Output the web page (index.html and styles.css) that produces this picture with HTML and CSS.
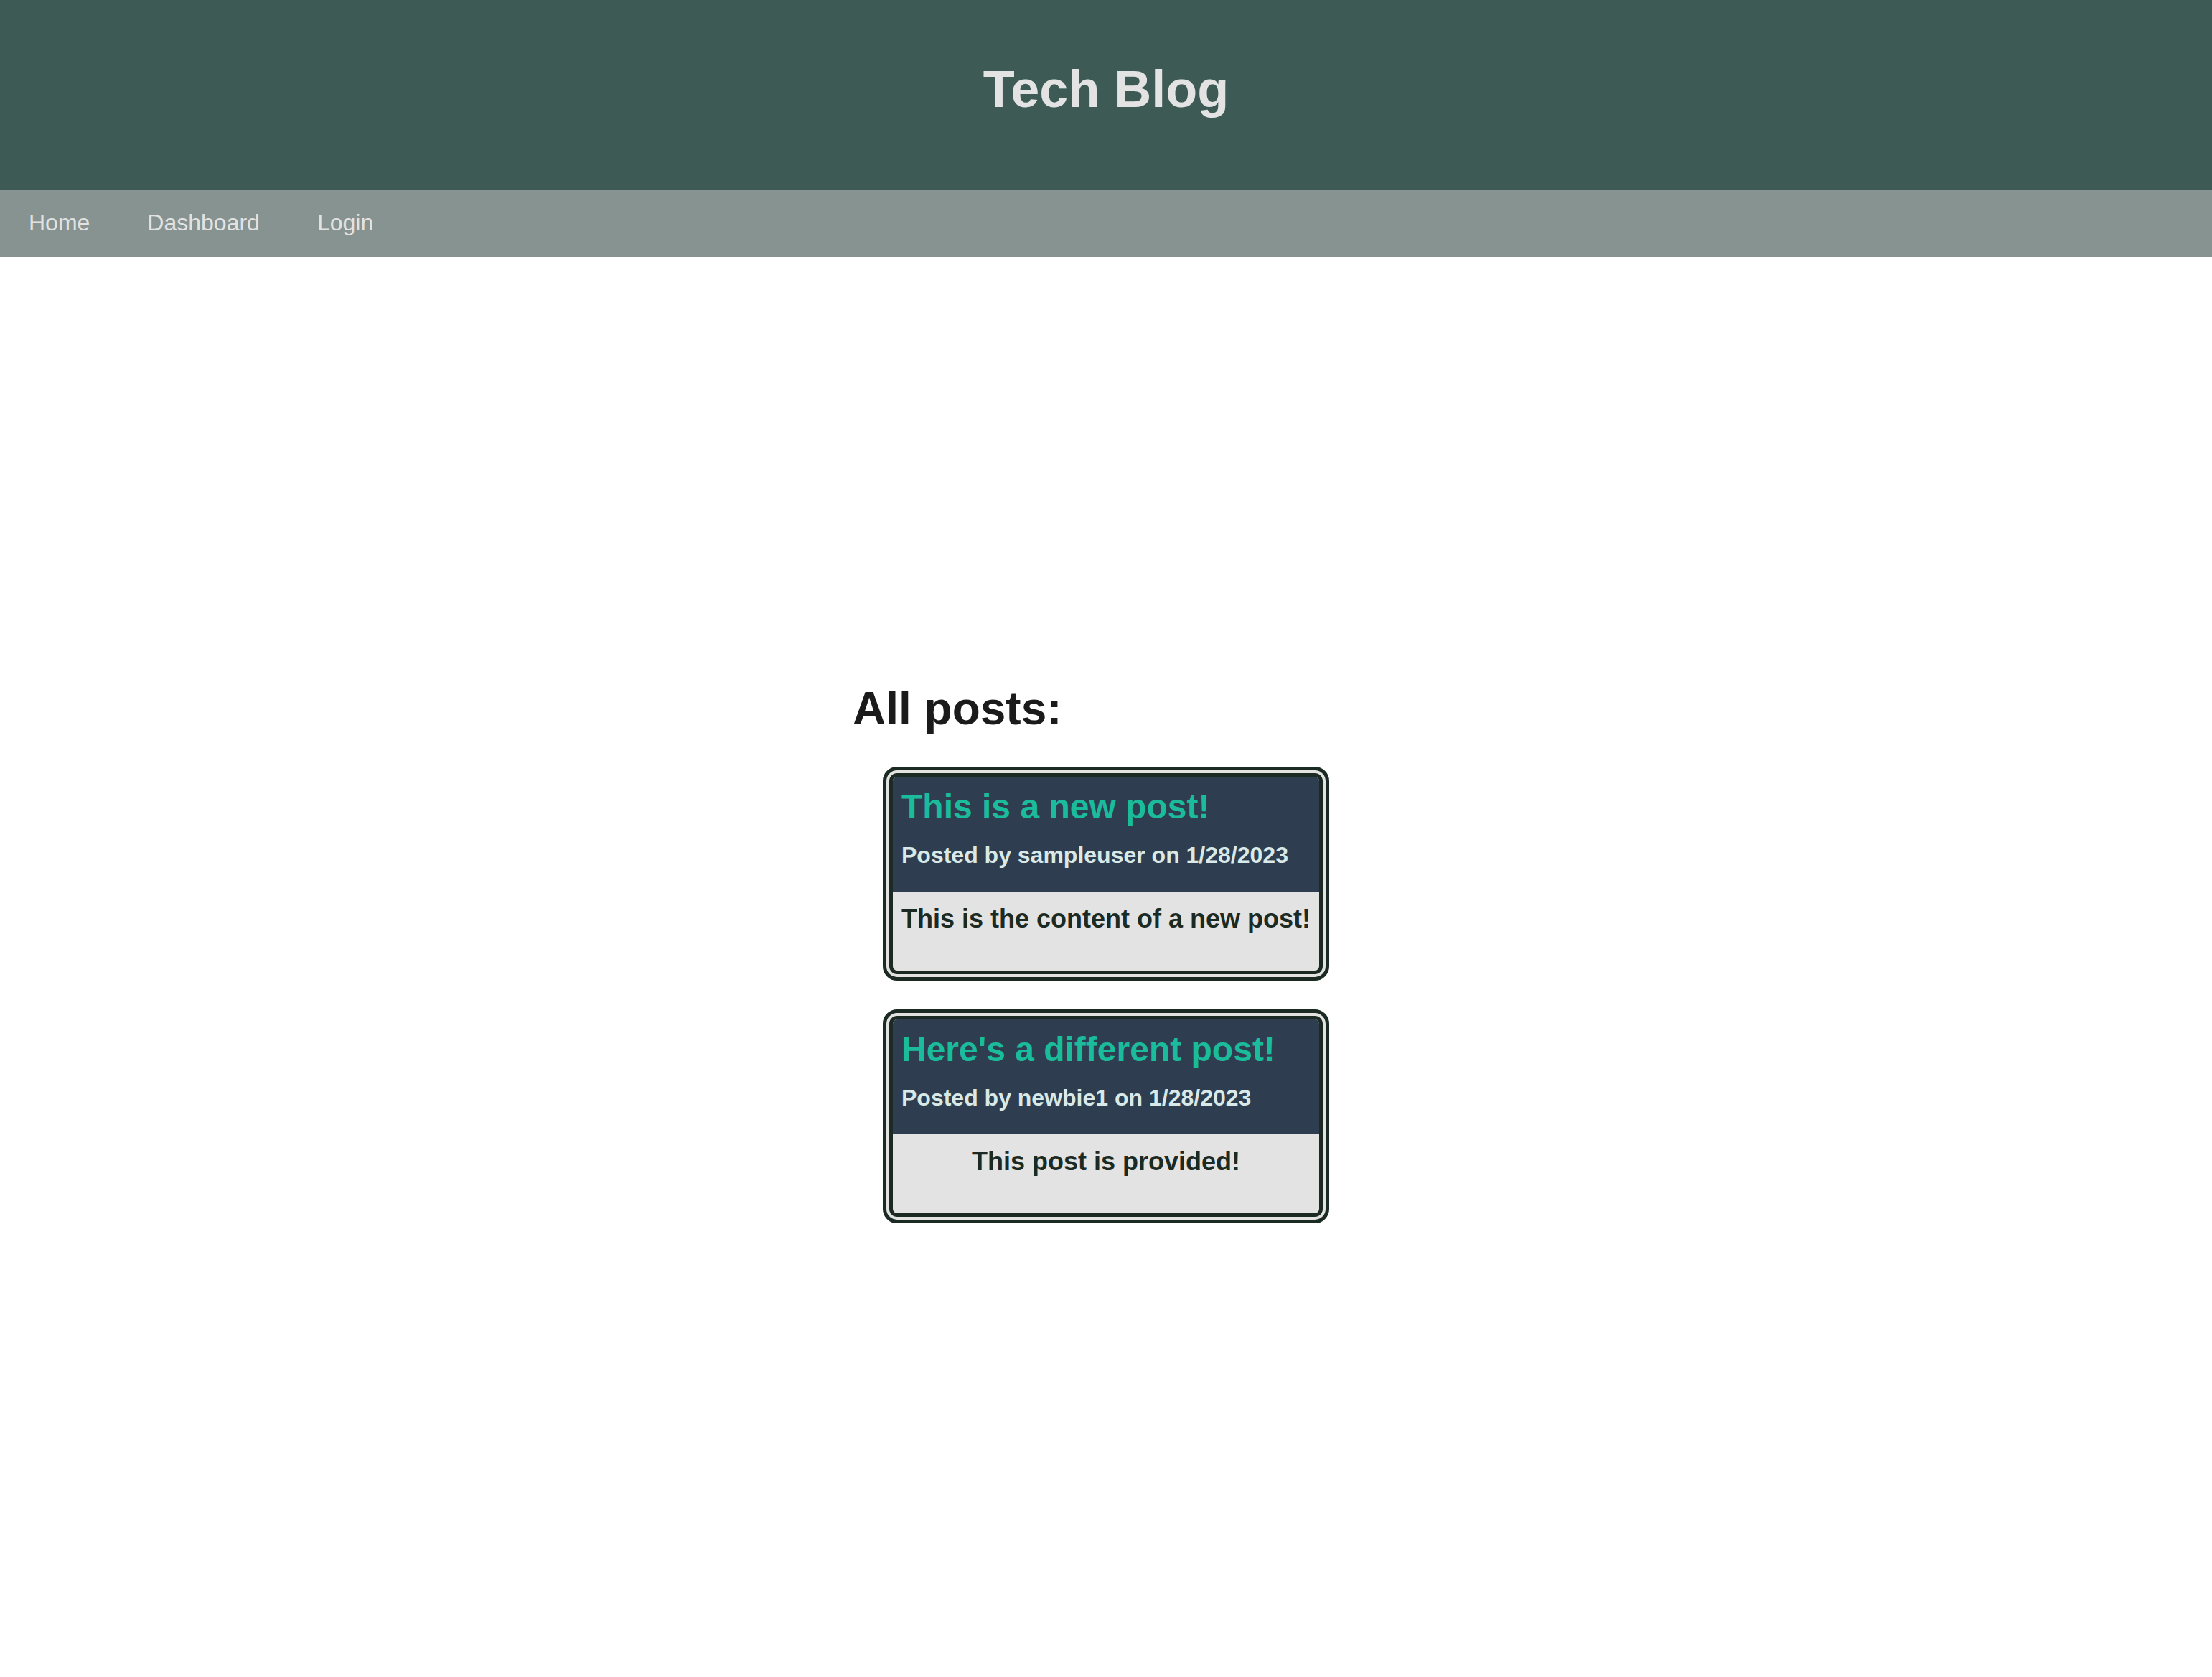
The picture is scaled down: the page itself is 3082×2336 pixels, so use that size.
FILE: index.html
```html
<!DOCTYPE html>
<html lang="en">
<head>
<meta charset="utf-8">
<title>Tech Blog</title>
<link rel="stylesheet" href="styles.css">
</head>
<body>
<header class="site-header">
  <h1 class="site-title">Tech Blog</h1>
</header>
<nav class="site-nav">
  <a class="nav-link" href="#">Home</a>
  <a class="nav-link" href="#">Dashboard</a>
  <a class="nav-link" href="#">Login</a>
</nav>
<main class="main">
  <section class="posts">
    <h2 class="posts-heading">All posts:</h2>
    <article class="post-card">
      <div class="post-head">
        <h2 class="post-title">This is a new post!</h2>
        <p class="post-meta">Posted by sampleuser on 1/28/2023</p>
      </div>
      <div class="post-body">
        <p class="post-content">This is the content of a new post!</p>
      </div>
    </article>
    <article class="post-card">
      <div class="post-head">
        <h2 class="post-title">Here's a different post!</h2>
        <p class="post-meta">Posted by newbie1 on 1/28/2023</p>
      </div>
      <div class="post-body">
        <p class="post-content">This post is provided!</p>
      </div>
    </article>
  </section>
</main>
</body>
</html>
```

FILE: styles.css
```css
* {
  box-sizing: border-box;
}

body {
  margin: 0;
  font-family: "Liberation Sans", Arial, Helvetica, sans-serif;
  background: #ffffff;
  color: #1b1b1b;
}

.site-header {
  background: #3d5a55;
  padding: 83px 0 100px;
}

.site-title {
  margin: 0;
  text-align: center;
  font-size: 72px;
  font-weight: bold;
  line-height: normal;
  color: #e3e3e3;
}

.site-nav {
  background: #879390;
  display: flex;
  padding: 27px 0 29px;
}

.nav-link {
  padding: 0 40px;
  font-size: 32px;
  line-height: normal;
  color: #e2e2e2;
  text-decoration: none;
}

.main {
  padding-top: 592px;
  padding-bottom: 120px;
}

.posts {
  width: 706px;
  margin: 0 auto;
  display: flex;
  flex-direction: column;
  gap: 40px;
}

.posts-heading {
  margin: 0 0 4px;
  font-size: 64px;
  font-weight: bold;
  line-height: normal;
  color: #1b1b1b;
}

.post-card {
  width: 622px;
  align-self: center;
  border: 14px double #1b2b24;
  border-radius: 20px;
  background: #e3e3e3;
  overflow: hidden;
}

.post-head {
  background: #2e3e50;
  padding: 14px 12px 32px;
}

.post-title {
  margin: 0 0 22px;
  font-size: 48px;
  font-weight: bold;
  line-height: normal;
  color: #1abc9c;
}

.post-meta {
  margin: 0;
  font-size: 32px;
  font-weight: bold;
  line-height: normal;
  color: #d9e9e8;
}

.post-body {
  padding: 17px 2px 51px;
  text-align: center;
}

.post-content {
  margin: 0;
  font-size: 36px;
  font-weight: bold;
  line-height: normal;
  color: #1b2b24;
  white-space: nowrap;
}
```
